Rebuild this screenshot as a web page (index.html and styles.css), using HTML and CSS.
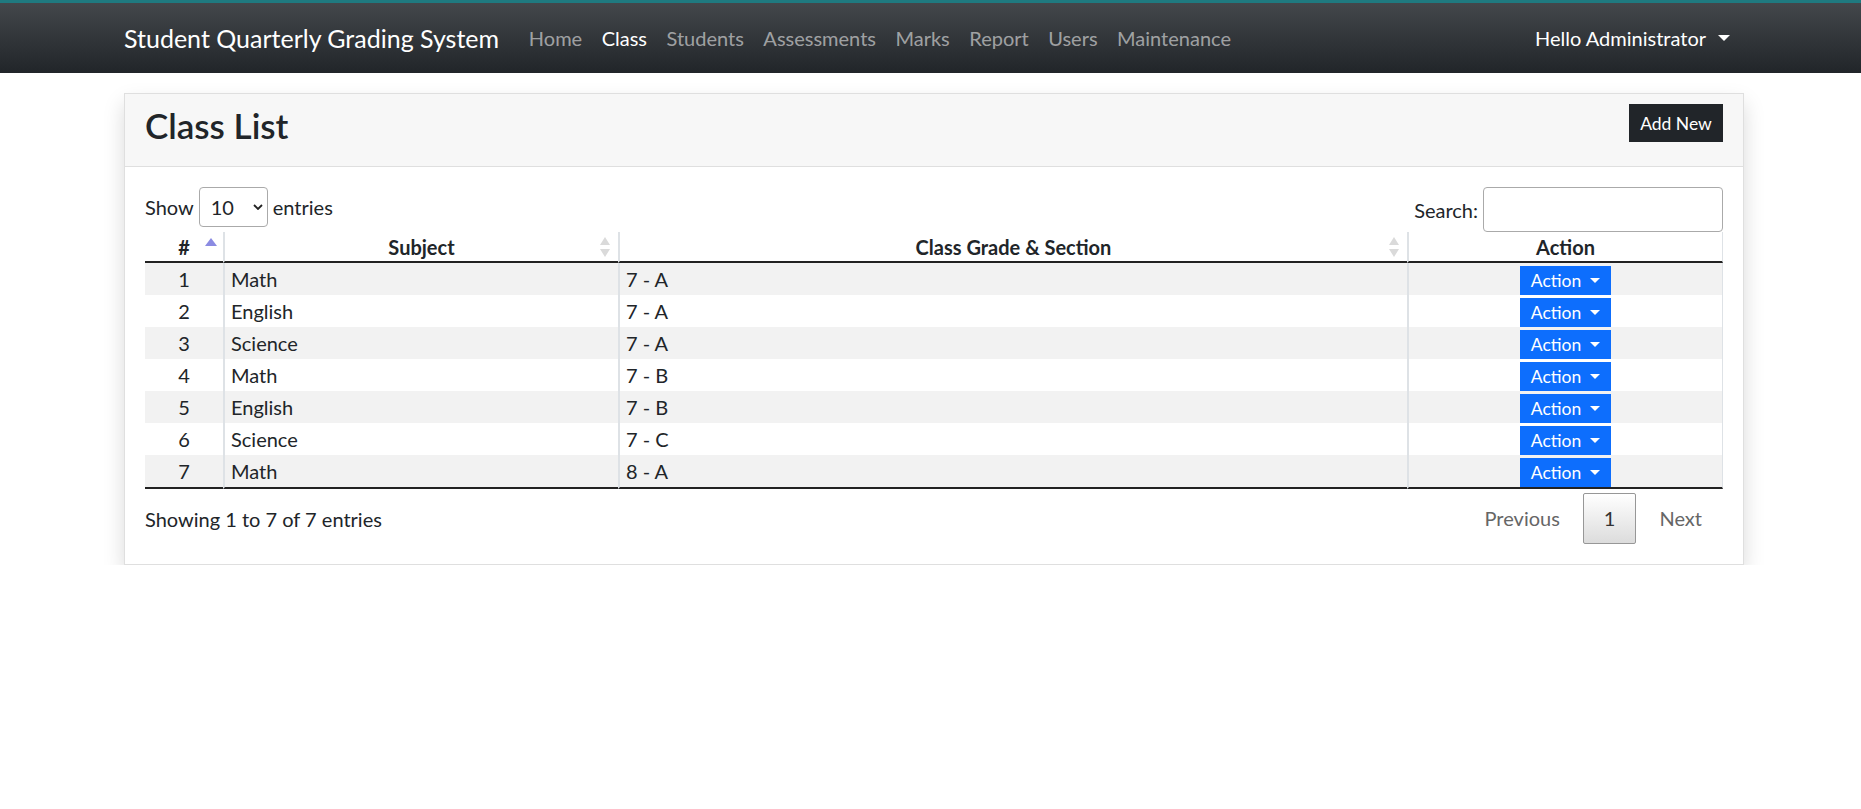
FILE: index.html
```html
<!DOCTYPE html>
<html lang="en">
<head>
<meta charset="utf-8">
<title>Class List</title>
<link rel="stylesheet" href="styles.css">
</head>
<body>
<nav class="topbar">
  <div class="container nav-inner">
    <a class="brand" href="#">Student Quarterly Grading System</a>
    <ul class="nav-links">
      <li><a href="#">Home</a></li>
      <li class="active"><a href="#">Class</a></li>
      <li><a href="#">Students</a></li>
      <li><a href="#">Assessments</a></li>
      <li><a href="#">Marks</a></li>
      <li><a href="#">Report</a></li>
      <li><a href="#">Users</a></li>
      <li><a href="#">Maintenance</a></li>
    </ul>
    <div class="user">Hello Administrator<span class="caret"></span></div>
  </div>
</nav>

<main class="container page">
  <section class="card">
    <div class="card-header">
      <h3 class="card-title">Class List</h3>
      <button class="btn-add">Add New</button>
    </div>
    <div class="card-body">
      <div class="dt-top">
        <div class="dt-length">Show <span class="select-box"><span>10</span><svg class="chev" width="10" height="6" viewBox="0 0 10 6"><path d="M1 1 L5 5 L9 1" fill="none" stroke="#222" stroke-width="1.8"/></svg></span> entries</div>
        <div class="dt-search">Search:<span class="search-input"></span></div>
      </div>
      <table class="dt">
        <colgroup><col class="c1"><col class="c2"><col class="c3"><col class="c4"></colgroup>
        <thead>
          <tr>
            <th class="sortable">#<svg class="sort-asc" width="12" height="8" viewBox="0 0 12 8"><path d="M6 0 L12 8 L0 8 Z" fill="#8b8be2"/></svg></th>
            <th class="sortable">Subject<svg class="sort-both" width="12" height="20" viewBox="0 0 12 20"><path d="M6 0 L11 8 L1 8 Z M6 20 L11 12 L1 12 Z" fill="#dadada"/></svg></th>
            <th class="sortable">Class Grade &amp; Section<svg class="sort-both" width="12" height="20" viewBox="0 0 12 20"><path d="M6 0 L11 8 L1 8 Z M6 20 L11 12 L1 12 Z" fill="#dadada"/></svg></th>
            <th>Action</th>
          </tr>
        </thead>
        <tbody>
          <tr><td class="num">1</td><td>Math</td><td>7 - A</td><td class="act"><button class="btn-act">Action<span class="dcaret"></span></button></td></tr>
          <tr><td class="num">2</td><td>English</td><td>7 - A</td><td class="act"><button class="btn-act">Action<span class="dcaret"></span></button></td></tr>
          <tr><td class="num">3</td><td>Science</td><td>7 - A</td><td class="act"><button class="btn-act">Action<span class="dcaret"></span></button></td></tr>
          <tr><td class="num">4</td><td>Math</td><td>7 - B</td><td class="act"><button class="btn-act">Action<span class="dcaret"></span></button></td></tr>
          <tr><td class="num">5</td><td>English</td><td>7 - B</td><td class="act"><button class="btn-act">Action<span class="dcaret"></span></button></td></tr>
          <tr><td class="num">6</td><td>Science</td><td>7 - C</td><td class="act"><button class="btn-act">Action<span class="dcaret"></span></button></td></tr>
          <tr><td class="num">7</td><td>Math</td><td>8 - A</td><td class="act"><button class="btn-act">Action<span class="dcaret"></span></button></td></tr>
        </tbody>
      </table>
      <div class="dt-bottom">
        <div class="dt-info">Showing 1 to 7 of 7 entries</div>
        <div class="dt-paginate">
          <span class="page-btn disabled">Previous</span>
          <span class="page-btn current">1</span>
          <span class="page-btn disabled">Next</span>
        </div>
      </div>
    </div>
  </section>
</main>
</body>
</html>
```
FILE: styles.css
```css
* { box-sizing: border-box; }
html, body { margin: 0; padding: 0; }
body {
  font-family: Lato, "Open Sans", sans-serif;
  font-size: 20px;
  color: #212529;
  background: #fff;
}
.container { width: 1620px; margin-left: 124px; }

/* Navbar */
.topbar {
  border-top: 3px solid #1f7a80;
  height: 73px;
  background: linear-gradient(180deg, #43474b 0%, #212529 100%);
}
.nav-inner { height: 70px; display: flex; align-items: center; }
.brand { color: #fff; font-size: 25px; margin-right: 20px; text-decoration: none; }
.nav-links { display: flex; list-style: none; margin: 0; padding: 0; }
.nav-links a { display: block; padding: 0 9.75px; color: rgba(255,255,255,.55); text-decoration: none; }
.nav-links .active a { color: #fff; }
.user { margin-left: auto; color: #fff; display: flex; align-items: center; padding-right: 14px; }
.caret { margin-left: 12px; width: 0; height: 0; border-top: 6px solid #fff; border-left: 6px solid transparent; border-right: 6px solid transparent; }

/* Card */
.page { margin-top: 20px; }
.card { border: 1px solid #dfdfdf; background: #fff; box-shadow: 0 10px 20px rgba(0,0,0,.15); }
.card-header {
  height: 73px;
  background: #f7f7f7;
  border-bottom: 1px solid #dfdfdf;
  padding: 10px 20px;
  display: flex;
  justify-content: space-between;
  align-items: flex-start;
}
.card-title { margin: 0; font-size: 35px; font-weight: 600; line-height: 42px; }
.btn-add {
  height: 38px; width: 94px; padding: 0;
  background: #212529; color: #fff; border: 1px solid #212529; border-radius: 0;
  font-family: inherit; font-size: 17.5px;
}
.card-body { padding: 20px; }

/* DataTables top */
.dt-top { height: 45px; display: flex; justify-content: space-between; align-items: flex-start; }
.dt-length { display: flex; align-items: center; height: 40px; gap: 5px; }
.select-box {
  width: 69px; height: 40px; border: 1px solid #aaa; border-radius: 4px;
  display: flex; align-items: center; justify-content: space-between; padding: 0 4px 0 11px;
}
.dt-search { display: flex; align-items: center; height: 45px; }
.search-input { width: 240px; height: 45px; border: 1px solid #aaa; border-radius: 4px; margin-left: 5px; }

/* Table */
.dt { width: 1578px; border-collapse: separate; border-spacing: 0; table-layout: fixed; }
.c1 { width: 78px; } .c2 { width: 395px; } .c3 { width: 789px; } .c4 { width: 316px; }
.dt th {
  position: relative; height: 31px; padding: 0 6px; font-weight: 700; text-align: center;
  border-bottom: 2px solid #222; border-left: 2px solid #dee2e6;
}
.dt th:first-child, .dt td:first-child { border-left: 0; }
.dt th:last-child, .dt td:last-child { border-right: 1px solid #dee2e6; }
.sort-asc { position: absolute; right: 6px; top: 6px; }
.sort-both { position: absolute; right: 7px; top: 5px; }
.dt td { height: 32px; padding: 0 6px; border-left: 2px solid #dee2e6; white-space: nowrap; }
.dt tbody tr:nth-child(odd) td { background: #f2f2f2; }
.dt tbody tr:last-child td { border-bottom: 2px solid #222; }
.dt td.num { text-align: center; }
.dt td.act { text-align: center; vertical-align: bottom; padding-top: 3px; }
.btn-act {
  display: inline-flex; align-items: center; height: 29px; padding: 0 10px;
  background: #0d6efd; color: #fff; border: 1px solid #0d6efd; border-radius: 0;
  font-family: inherit; font-size: 17.5px; vertical-align: bottom;
}
.dcaret { margin-left: 9px; width: 0; height: 0; border-top: 5px solid #fff; border-left: 5px solid transparent; border-right: 5px solid transparent; }

/* Bottom */
.dt-bottom { display: flex; justify-content: space-between; align-items: flex-start; }
.dt-info { padding-top: 15px; line-height: 30px; }
.dt-paginate { display: flex; padding-top: 4px; }
.page-btn { padding: 10px 20px; line-height: 29px; border: 1px solid transparent; margin-left: 2px; color: #666; border-radius: 2px; }
.page-btn.current { color: #333; border-color: #979797; background: linear-gradient(180deg, #fff 0%, #dcdcdc 100%); }
```
